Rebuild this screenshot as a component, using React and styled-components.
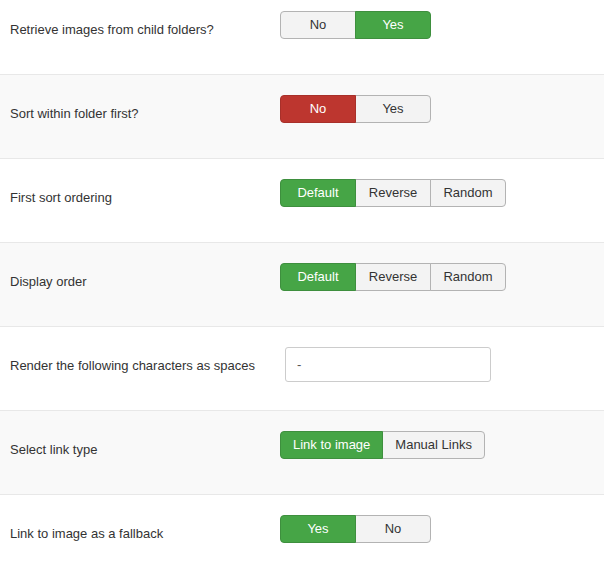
import React, { useState } from 'react';
import styled, { createGlobalStyle } from 'styled-components';

const GlobalStyle = createGlobalStyle`
  html, body {
    margin: 0;
    padding: 0;
    background: #fff;
  }
  body {
    font-family: "Liberation Sans", Arial, sans-serif;
    font-size: 13px;
    color: #333;
  }
`;

const Form = styled.div`
  margin-top: -10px;
  overflow: hidden;
`;

const Row = styled.div`
  display: grid;
  grid-template-columns: 280px 1fr;
  height: 84px;
  box-sizing: border-box;
  border-top: 1px solid ${p => (p.$first ? 'transparent' : '#e8e8e8')};
  background: ${p => (p.$shaded ? '#f9f9f9' : '#fff')};
`;

const Label = styled.div`
  padding: 30px 0 0 10px;
  line-height: 18px;
  color: #333;
`;

const Controls = styled.div`
  padding-top: 20px;
`;

const Group = styled.div`
  display: inline-flex;
`;

const colors = {
  success: { bg: '#46a546', border: '#3e8f3e', text: '#fff' },
  danger: { bg: '#bd362f', border: '#a8302a', text: '#fff' },
  none: { bg: '#f3f3f3', border: '#b3b3b3', text: '#333' },
};

const Btn = styled.button`
  font-family: inherit;
  font-size: 13px;
  height: 28px;
  min-width: 76px;
  padding: 0 12px 1px;
  box-sizing: border-box;
  margin: 0 0 0 -1px;
  cursor: pointer;
  background: ${p => colors[p.$tone].bg};
  color: ${p => colors[p.$tone].text};
  border: 1px solid ${p => colors[p.$tone].border};
  border-radius: 0;
  position: relative;
  z-index: ${p => (p.$tone === 'none' ? 0 : 1)};
  &:first-child {
    margin-left: 0;
    border-radius: 4px 0 0 4px;
  }
  &:last-child {
    border-radius: 0 4px 4px 0;
  }
`;

const TextInput = styled.input`
  margin: 0 0 0 5px;
  width: 206px;
  height: 35px;
  box-sizing: border-box;
  border: 1px solid #ccc;
  border-radius: 3px;
  padding: 0 11px;
  font-family: inherit;
  font-size: 13px;
  color: #555;
  outline: none;
`;

const Toggle = ({ options, value, onChange, activeTone }) => (
  <Group>
    {options.map(o => (
      <Btn
        key={o}
        $tone={value === o ? activeTone(o) : 'none'}
        onClick={() => onChange(o)}
      >
        {o}
      </Btn>
    ))}
  </Group>
);

const yesNoTone = o => (o === 'No' ? 'danger' : 'success');
const greenTone = () => 'success';

export default function App() {
  const [vals, setVals] = useState({
    child: 'Yes',
    sortFolder: 'No',
    firstSort: 'Default',
    display: 'Default',
    spaces: '-',
    linkType: 'Link to image',
    fallback: 'Yes',
  });
  const set = k => v => setVals({ ...vals, [k]: v });

  const rows = [
    { label: 'Retrieve images from child folders?', key: 'child', options: ['No', 'Yes'], tone: yesNoTone },
    { label: 'Sort within folder first?', key: 'sortFolder', options: ['No', 'Yes'], tone: yesNoTone },
    { label: 'First sort ordering', key: 'firstSort', options: ['Default', 'Reverse', 'Random'], tone: greenTone },
    { label: 'Display order', key: 'display', options: ['Default', 'Reverse', 'Random'], tone: greenTone },
    { label: 'Render the following characters as spaces', key: 'spaces', input: true },
    { label: 'Select link type', key: 'linkType', options: ['Link to image', 'Manual Links'], tone: greenTone },
    { label: 'Link to image as a fallback', key: 'fallback', options: ['Yes', 'No'], tone: yesNoTone },
  ];

  return (
    <>
      <GlobalStyle />
      <Form>
        {rows.map((r, i) => (
          <Row key={r.key} $first={i === 0} $shaded={i % 2 === 1}>
            <Label>{r.label}</Label>
            <Controls>
              {r.input ? (
                <TextInput value={vals[r.key]} onChange={e => set(r.key)(e.target.value)} />
              ) : (
                <Toggle
                  options={r.options}
                  value={vals[r.key]}
                  onChange={set(r.key)}
                  activeTone={r.tone}
                />
              )}
            </Controls>
          </Row>
        ))}
      </Form>
    </>
  );
}
